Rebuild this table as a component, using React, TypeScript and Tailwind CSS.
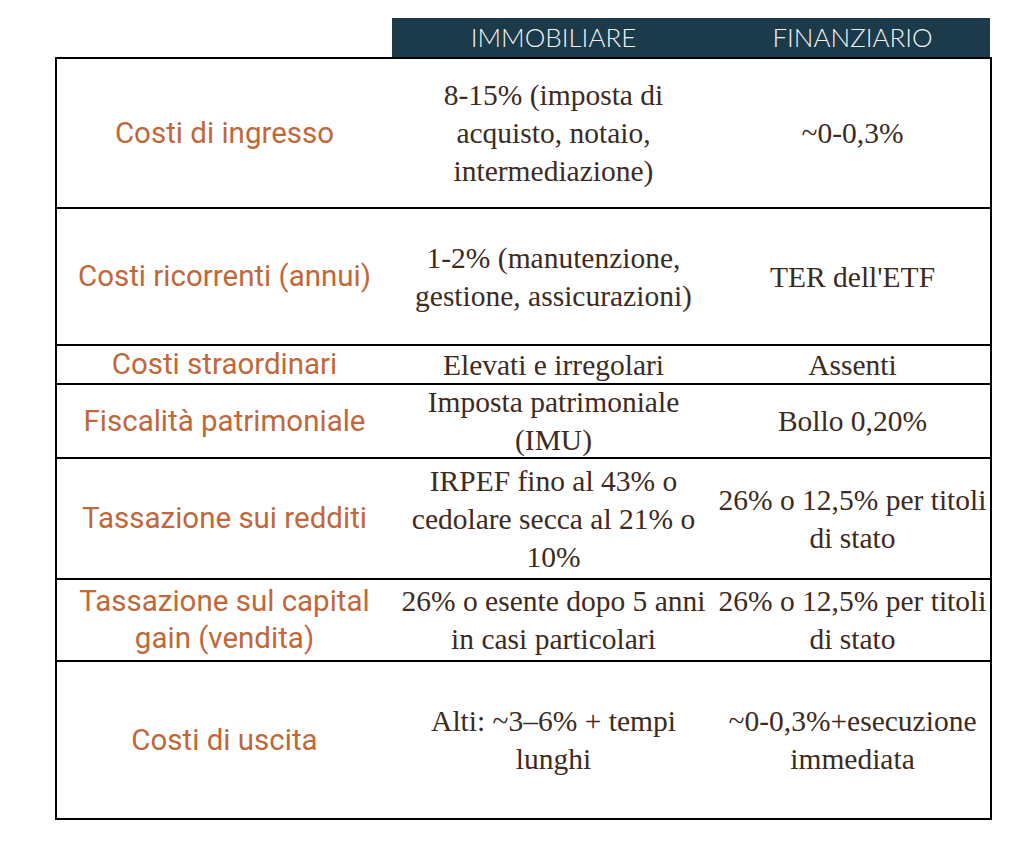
import React from "react";

type Row = { h: string; label: string[]; a: string[]; b: string[] };

const rows: Row[] = [
  { h: "h-[148px]", label: ["Costi di ingresso"], a: ["8-15% (imposta di", "acquisto, notaio,", "intermediazione)"], b: ["~0-0,3%"] },
  { h: "h-[137px]", label: ["Costi ricorrenti (annui)"], a: ["1-2% (manutenzione,", "gestione, assicurazioni)"], b: ["TER dell'ETF"] },
  { h: "h-[39px]", label: ["Costi straordinari"], a: ["Elevati e irregolari"], b: ["Assenti"] },
  { h: "h-[74px]", label: ["Fiscalità patrimoniale"], a: ["Imposta patrimoniale", "(IMU)"], b: ["Bollo 0,20%"] },
  { h: "h-[121px]", label: ["Tassazione sui redditi"], a: ["IRPEF fino al 43% o", "cedolare secca al 21% o", "10%"], b: ["26% o 12,5% per titoli", "di stato"] },
  { h: "h-[82px]", label: ["Tassazione sul capital", "gain (vendita)"], a: ["26% o esente dopo 5 anni", "in casi particolari"], b: ["26% o 12,5% per titoli", "di stato"] },
  { h: "h-[158px]", label: ["Costi di uscita"], a: ["Alti: ~3–6% + tempi", "lunghi"], b: ["~0-0,3%+esecuzione", "immediata"] },
];

function Lines({ lines }: { lines: string[] }) {
  return (
    <>
      {lines.map((l, i) => (
        <div key={i} className="whitespace-nowrap">
          {l}
        </div>
      ))}
    </>
  );
}

export default function App() {
  return (
    <div className="w-[1024px] h-[848px] bg-white pt-[18px] pl-[55px]">
      <div className="w-[937px]">
        <div className="ml-[337px] flex h-[39px] w-[598px] bg-[#1b3a4a] text-[#f2f2f2] font-['Lato',sans-serif] font-light text-[26px] leading-[39px]">
          <div className="w-[323px] text-center">IMMOBILIARE</div>
          <div className="w-[275px] text-center">FINANZIARIO</div>
        </div>
        <div className="border-2 border-black">
          {rows.map((r, i) => (
            <div
              key={i}
              className={`flex ${r.h} ${i > 0 ? "border-t-2 border-black" : ""}`}
            >
              <div className="w-[335px] flex flex-col items-center justify-center text-center text-[#c0683a] font-['Roboto',sans-serif] text-[29.5px] leading-[37px]">
                <Lines lines={r.label} />
              </div>
              <div className="w-[323px] flex flex-col items-center justify-center text-center text-[#3d2b1f] font-['Liberation_Serif',serif] text-[29.5px] leading-[38px]">
                <Lines lines={r.a} />
              </div>
              <div className="w-[275px] flex flex-col items-center justify-center text-center text-[#3d2b1f] font-['Liberation_Serif',serif] text-[29.5px] leading-[38px]">
                <Lines lines={r.b} />
              </div>
            </div>
          ))}
        </div>
      </div>
    </div>
  );
}
